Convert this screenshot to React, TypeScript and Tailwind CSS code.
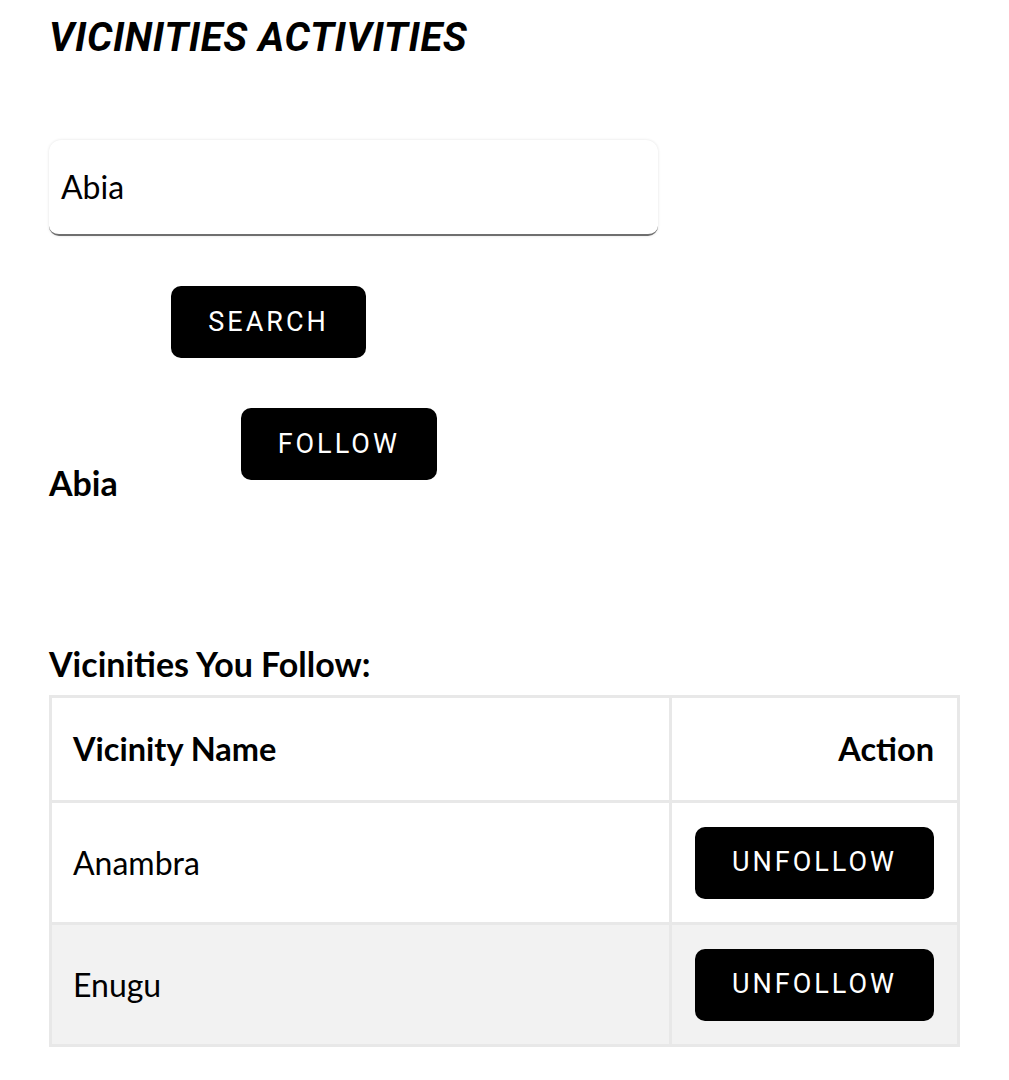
import React from 'react';

const rows = [
  { name: 'Anambra', shaded: false },
  { name: 'Enugu', shaded: true },
];

function BlackButton({ label, className = '' }: { label: string; className?: string }) {
  return (
    <button
      className={`bg-black text-white rounded-[10px] font-['Roboto'] font-normal text-[27px] tracking-[3px] uppercase flex items-center justify-center ${className}`}
    >
      {label}
    </button>
  );
}

export default function App() {
  return (
    <main className="min-h-screen bg-white px-[49px] pt-[13px] font-['Lato',sans-serif] text-black">
      <h1 className="font-['Roboto',sans-serif] italic font-bold text-[40px] leading-[50px] tracking-[0.6px]">
        VICINITIES ACTIVITIES
      </h1>

      <div className="mt-[77px] w-[609px] h-[96px] rounded-t-[12px] rounded-b-[10px] bg-white border-b-[2px] border-[#6f6f6f] shadow-[0_0_3px_rgba(0,0,0,0.12)] flex items-center px-[12px]">
        <span className="text-[32px]">Abia</span>
      </div>

      <BlackButton label="Search" className="mt-[50px] ml-[122px] w-[195px] h-[72px]" />

      <div className="mt-[50px] flex items-start">
        <span className="mt-[55px] font-bold text-[34px] leading-[40px]">Abia</span>
        <BlackButton label="Follow" className="ml-[123px] w-[196px] h-[72px]" />
      </div>

      <h2 className="mt-[141px] font-bold text-[34px] leading-[40px]">Vicinities You Follow:</h2>

      <table className="mt-[11px] w-[911px] border-collapse border-[3px] border-[#e8e8e8] text-[32px]">
        <thead>
          <tr className="h-[105px]">
            <th className="w-[620px] border-[3px] border-[#e8e8e8] text-left font-bold text-[32.5px] pl-[21px]">Vicinity Name</th>
            <th className="border-[3px] border-[#e8e8e8] text-right font-bold text-[32.5px] pr-[23px]">Action</th>
          </tr>
        </thead>
        <tbody>
          {rows.map((r) => (
            <tr key={r.name} className={`h-[122px] ${r.shaded ? 'bg-[#f2f2f2]' : 'bg-white'}`}>
              <td className="border-[3px] border-[#e8e8e8] pl-[21px]">{r.name}</td>
              <td className="border-[3px] border-[#e8e8e8] pr-[23px]">
                <div className="flex justify-end">
                  <BlackButton label="Unfollow" className="w-[239px] h-[72px]" />
                </div>
              </td>
            </tr>
          ))}
        </tbody>
      </table>
    </main>
  );
}
